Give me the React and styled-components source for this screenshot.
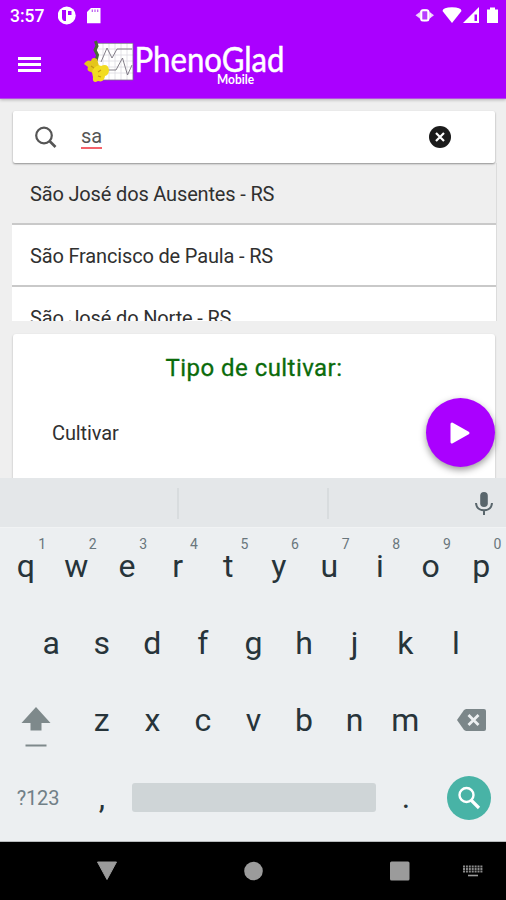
import React from 'react';
import styled, { createGlobalStyle } from 'styled-components';

const GlobalStyle = createGlobalStyle`
  * {
    box-sizing: border-box;
  }

  body {
    margin: 0;
    font-family: Roboto, 'Liberation Sans', sans-serif;
  }

  svg {
    display: block;
  }
`;

// Page
const Screen = styled.div`
  display: flex;
  flex-direction: column;
  width: 506px;
  height: 900px;
  overflow: hidden;
  background-color: #efefef;
`;

// Header
const Header = styled.header`
  flex: none;
  height: 99px;
  background-color: #aa00ff;
  border-bottom: 1px solid #b54be6;
  box-shadow: 0 1px 3px rgba(0, 0, 0, 0.25);
`;

const StatusBar = styled.div`
  display: flex;
  align-items: center;
  justify-content: space-between;
  height: 32px;
  padding: 0 8px 0 10px;
`;

const StatusGroup = styled.div`
  display: flex;
  align-items: center;
`;

const Clock = styled.span`
  width: 48px;
  color: #ffffff;
  font-size: 17.5px;
  font-weight: 500;
  line-height: 32px;
`;

const Toolbar = styled.div`
  display: flex;
  align-items: flex-start;
  padding: 5px 0 0 18px;
`;

const MenuButton = styled.button`
  display: flex;
  flex-direction: column;
  gap: 3px;
  width: 24px;
  margin-top: 20px;
  padding: 0;
  border: none;
  background: none;
`;

const MenuLine = styled.span`
  width: 23px;
  height: 3px;
  background-color: #ffffff;
`;

const Logo = styled.svg`
  margin-left: 38px;
`;

// Search and results
const Content = styled.main`
  flex: 1;
  min-height: 0;
  padding: 12px 11px 0 13px;
  overflow: hidden;
`;

const SearchBox = styled.div`
  position: relative;
  display: flex;
  align-items: center;
  height: 52px;
  padding: 0 44px 0 21px;
  background-color: #ffffff;
  border-radius: 2px;
  box-shadow: 0 1px 2px rgba(0, 0, 0, 0.4);
`;

const SearchText = styled.span`
  margin-left: 24px;
  margin-right: auto;
  border-bottom: 2px solid #f4626a;
  color: #555555;
  font-size: 20px;
  line-height: 21px;
`;

const ResultList = styled.ul`
  height: 158px;
  margin: 0 -2px 0 -1px;
  padding: 0;
  overflow: hidden;
  list-style: none;
  border-right: 1px solid #dcdcdc;
`;

const ResultItem = styled.li`
  height: ${(props) => (props.$active ? '62px' : '61.5px')};
  padding-left: 18px;
  border-bottom: 2px solid #c9c9c9;
  background-color: ${(props) => (props.$active ? '#efefef' : '#ffffff')};
  color: #303030;
  font-size: 20px;
  letter-spacing: -0.16px;
  line-height: 62px;
  white-space: nowrap;
`;

const Card = styled.section`
  position: relative;
  height: 160px;
  margin-top: 13px;
  padding-top: 18px;
  background-color: #ffffff;
  border-radius: 3px;
  box-shadow: 0 1px 2px rgba(0, 0, 0, 0.3);
`;

const CardTitle = styled.h2`
  margin: 0;
  color: #0b6b0b;
  font-size: 24px;
  font-weight: 400;
  letter-spacing: 0.45px;
  line-height: 32px;
  text-align: center;
  -webkit-text-stroke: 0.3px #0b6b0b;
`;

const FieldLabel = styled.div`
  margin: 37px 0 0 39px;
  color: #303030;
  font-size: 20px;
  letter-spacing: -0.1px;
  line-height: 24px;
`;

const PlayButton = styled.button`
  position: absolute;
  top: 64px;
  right: 0;
  display: flex;
  align-items: center;
  justify-content: center;
  width: 69px;
  height: 69px;
  padding: 0;
  border: none;
  border-radius: 50%;
  background-color: #aa00ff;
  box-shadow: 0 3px 7px rgba(0, 0, 0, 0.4);
`;

// Keyboard
const Keyboard = styled.div`
  flex: none;
  height: 364px;
  background-color: #eceff1;
  border-bottom: 1px solid #b8bbbc;
`;

const SuggestionBar = styled.div`
  display: flex;
  align-items: center;
  height: 50px;
  padding: 2px 12px 0 0;
  background-color: #e4e7e9;
  border-bottom: 1px solid #f1f3f4;
`;

const Suggestion = styled.div`
  width: ${(props) => props.$width}px;
  height: 31px;
  border-right: 2px solid #d8dcde;
`;

const Mic = styled.svg`
  margin-left: auto;
`;

const KeyRow = styled.div`
  display: flex;
  align-items: center;
  height: 77px;
  padding: 0 ${(props) => props.$inset || 0}px;
`;

const Key = styled.div`
  position: relative;
  width: 50.6px;
  padding-left: 1px;
  color: #27343a;
  font-size: 32px;
  line-height: 77px;
  text-align: center;
`;

const KeyHint = styled.span`
  position: absolute;
  top: 8px;
  right: 4.6px;
  color: #69767c;
  font-size: 14px;
  line-height: 16px;
`;

const WideKey = styled.div`
  display: flex;
  flex: none;
  flex-direction: column;
  align-items: center;
  justify-content: center;
  width: 76px;
  height: 77px;
`;

const ShiftKey = styled(WideKey)`
  padding: 12px 4px 0 0;
`;

const DeleteKey = styled(WideKey)`
  padding: 0 0 2px 8px;
`;

const ModeKey = styled(WideKey)`
  color: #718087;
  font-size: 20px;
  letter-spacing: -0.2px;
`;

const SpaceBar = styled.div`
  width: 244px;
  height: 29px;
  margin: 0 4.1px 0 5.6px;
  border-radius: 3px;
  background-color: #cfd5d7;
`;

const EnterKey = styled.div`
  display: flex;
  align-items: center;
  justify-content: center;
  width: 44px;
  height: 44px;
  margin-left: 16px;
  border-radius: 50%;
  background-color: #48b3a6;
`;

// Android navigation
const NavBar = styled.nav`
  display: flex;
  flex: none;
  align-items: center;
  height: 58px;
  padding-left: 96px;
  background-color: #000000;
`;

const NavIcon = styled.svg`
  margin-right: ${(props) => props.$gap}px;
`;

const cities = ['São José dos Ausentes - RS', 'São Francisco de Paula - RS', 'São José do Norte - RS'];

const StatusIcons = () => (
  <svg width="84" height="20" viewBox="414 6 84 20" fill="#ffffff">
    <circle cx="424.8" cy="15.3" r="6" fillOpacity="0.75" />
    <path d="M415.5 15.3 L419.5 12.3 V18.3 Z M434 15.3 L430 12.3 V18.3 Z" fillOpacity="0.8" />
    <rect x="421.3" y="10.2" width="7" height="10.4" rx="1.5" fill="#b83dff" stroke="#ffffff" strokeWidth="2" />
    <path d="M442.5 11 Q443 7.3 452 7.3 Q461 7.3 461.5 11 L452 23 Z" />
    <path fillRule="evenodd" d="M479 7 V23 H463 Z M474.5 14.5 H477 V21 H474.5 Z" />
    <path d="M487 9.5 H490 V7.5 H495 V9.5 H498 V23 H487 Z" />
  </svg>
);

const NotificationIcons = () => (
  <svg width="44" height="20" viewBox="58 6 44 20">
    <circle cx="66.7" cy="15.5" r="9" fill="#ffffff" />
    <path d="M62 10 H66 V21 H64 Q62 20 62 18 Z M68 11 H71.5 V15 H68 Z" fill="#aa00ff" />
    <path d="M91 8 H100.5 V23.3 H87 V12 Z" fill="#ffffff" />
    <path d="M92.3 9.5 V12 M95 9.5 V12 M97.7 9.5 V12" stroke="#b956f0" strokeWidth="1.2" />
  </svg>
);

const PhenoGladLogo = () => (
  <Logo width="210" height="54" viewBox="80 37 210 54">
    <rect x="97" y="43" width="36" height="37" fill="#ffffff" />
    <path
      d="M103 43 V80 M109 43 V80 M115 43 V80 M121 43 V80 M127 43 V80 M97 49 H133 M97 55 H133 M97 61 H133 M97 67 H133 M97 73 H133"
      stroke="#dddce2"
      strokeWidth="0.8"
    />
    <path d="M97 43.4 H133 V80 H99" fill="none" stroke="#77708a" strokeWidth="0.8" />
    <path d="M101 62 L107 48 L112 58 L117 49 H132" fill="none" stroke="#77727d" strokeWidth="0.9" />
    <path d="M106 70 H116 L122.5 58 L127.5 75 L132 65" fill="none" stroke="#77727d" strokeWidth="0.9" />
    <path d="M95.5 41 L97 46 L95 50 L97.5 55 L96 61" fill="none" stroke="#476b35" strokeWidth="3" />
    <path d="M84 64 Q87 59 91 61 Q92 56 97 59 L99 66 L100 71 Q95 76 91 72 Q86 71 88 67 Z" fill="#e4c51b" />
    <path d="M94 68 Q98 64 101 66 Q108 63 109 70 Q109 75 105 76 Q104 83 98 81 Q92 84 93 77 Q91 71 94 68 Z" fill="#f2dc20" />
    <path d="M91 66 L94 68 M98 72 L101 70 M98 76 L101 77" stroke="#c19716" strokeWidth="1.2" />
    <text
      x="134.5"
      y="71.8"
      textLength="150"
      lengthAdjust="spacingAndGlyphs"
      fill="#ffffff"
      stroke="#ffffff"
      strokeWidth="0.5"
      fontFamily="Lato, sans-serif"
      fontSize="34"
    >
      PhenoGlad
    </text>
    <text
      x="217"
      y="83.5"
      textLength="37"
      lengthAdjust="spacingAndGlyphs"
      fill="#ffffff"
      fontFamily="Lato, sans-serif"
      fontSize="13"
      fontWeight="700"
    >
      Mobile
    </text>
  </Logo>
);

const PhoneKeyboard = () => (
  <Keyboard>
    <SuggestionBar>
      <Suggestion $width={179} />
      <Suggestion $width={150} />
      <Mic width="20" height="26" viewBox="0 0 20 26">
        <rect x="6.2" y="1" width="7.6" height="15" rx="3.8" fill="#59666c" />
        <path d="M2 12 Q2.5 19 10 19.3 Q17.5 19 18 12 M10 19 V24" fill="none" stroke="#59666c" strokeWidth="2" />
      </Mic>
    </SuggestionBar>

    <KeyRow>
      {'qwertyuiop'.split('').map((letter, index) => (
        <Key key={letter}>
          {letter}
          <KeyHint>{(index + 1) % 10}</KeyHint>
        </Key>
      ))}
    </KeyRow>

    <KeyRow $inset={25.3}>
      {'asdfghjkl'.split('').map((letter) => (
        <Key key={letter}>{letter}</Key>
      ))}
    </KeyRow>

    <KeyRow>
      <ShiftKey>
        <svg width="30" height="42" viewBox="0 0 30 42">
          <path d="M15 1 L29.5 17 H20.5 V24.5 H9.5 V17 H0.5 Z" fill="#7e898b" />
          <path d="M4.5 39.5 H25.5" stroke="#7e898b" strokeWidth="2" />
        </svg>
      </ShiftKey>
      {'zxcvbnm'.split('').map((letter) => (
        <Key key={letter}>{letter}</Key>
      ))}
      <DeleteKey>
        <svg width="30" height="24" viewBox="0 0 30 24">
          <path d="M9 1 H27 Q29 1 29 3 V21 Q29 23 27 23 H9 L7 22 L0 12 L7 2 Z" fill="#7b8689" />
          <path d="M11.5 7 L21.5 17 M21.5 7 L11.5 17" stroke="#eceff1" strokeWidth="2.8" />
        </svg>
      </DeleteKey>
    </KeyRow>

    <KeyRow>
      <ModeKey>?123</ModeKey>
      <Key>,</Key>
      <SpaceBar />
      <Key>.</Key>
      <EnterKey>
        <svg width="24" height="24" viewBox="0 0 24 24" fill="none" stroke="#ffffff">
          <circle cx="9.5" cy="9" r="7" strokeWidth="2.4" />
          <path d="M14 14 L22 22" strokeWidth="3.2" />
        </svg>
      </EnterKey>
    </KeyRow>
  </Keyboard>
);

const App = () => {
  return (
    <>
      <GlobalStyle />
      <Screen>
        <Header>
          <StatusBar>
            <StatusGroup>
              <Clock>3:57</Clock>
              <NotificationIcons />
            </StatusGroup>
            <StatusIcons />
          </StatusBar>
          <Toolbar>
            <MenuButton aria-label="Menu">
              <MenuLine />
              <MenuLine />
              <MenuLine />
            </MenuButton>
            <PhenoGladLogo />
          </Toolbar>
        </Header>

        <Content>
          <SearchBox>
            <svg width="23" height="24" viewBox="0 0 23 24" fill="none" stroke="#555555">
              <circle cx="10" cy="10.5" r="7.8" strokeWidth="2.2" />
              <path d="M15.5 16 L21.5 22" strokeWidth="2.6" />
            </svg>
            <SearchText>sa</SearchText>
            <svg width="22" height="22" viewBox="0 0 22 22">
              <circle cx="11" cy="11" r="11" fill="#1b1b1b" />
              <path d="M7 7 L15 15 M15 7 L7 15" stroke="#ffffff" strokeWidth="2.2" />
            </svg>
          </SearchBox>

          <ResultList>
            {cities.map((city, index) => (
              <ResultItem key={city} $active={index === 0}>
                {city}
              </ResultItem>
            ))}
          </ResultList>

          <Card>
            <CardTitle>Tipo de cultivar:</CardTitle>
            <FieldLabel>Cultivar</FieldLabel>
            <PlayButton aria-label="Play">
              <svg width="22" height="24" viewBox="0 0 22 24">
                <path d="M2 3 L18 12 L2 21 Z" fill="#ffffff" stroke="#ffffff" strokeWidth="3" strokeLinejoin="round" />
              </svg>
            </PlayButton>
          </Card>
        </Content>

        <PhoneKeyboard />

        {/* Back, home, recents and keyboard switch */}
        <NavBar>
          <NavIcon $gap={126} width="22" height="20" viewBox="0 0 22 20">
            <path d="M1.5 1 H20.5 L11 18.5 Z" fill="#9b9b9b" stroke="#9b9b9b" strokeLinejoin="round" />
          </NavIcon>
          <NavIcon $gap={126} width="20" height="20" viewBox="0 0 20 20">
            <circle cx="9.5" cy="10" r="9.3" fill="#9b9b9b" />
          </NavIcon>
          <NavIcon $gap={53} width="20" height="20" viewBox="0 0 20 20">
            <rect x="0" y="0.5" width="19.5" height="19" rx="1.5" fill="#9b9b9b" />
          </NavIcon>
          <NavIcon $gap={0} width="20" height="12" viewBox="0 0 20 12">
            <path d="M0 1.5 H20 M0 4 H20 M0 6.5 H20" stroke="#8a8a8a" strokeWidth="1.8" strokeDasharray="2 0.9" />
            <path d="M5 10.5 H15" stroke="#9b9b9b" strokeWidth="1.6" />
          </NavIcon>
        </NavBar>
      </Screen>
    </>
  );
};

export default App;
